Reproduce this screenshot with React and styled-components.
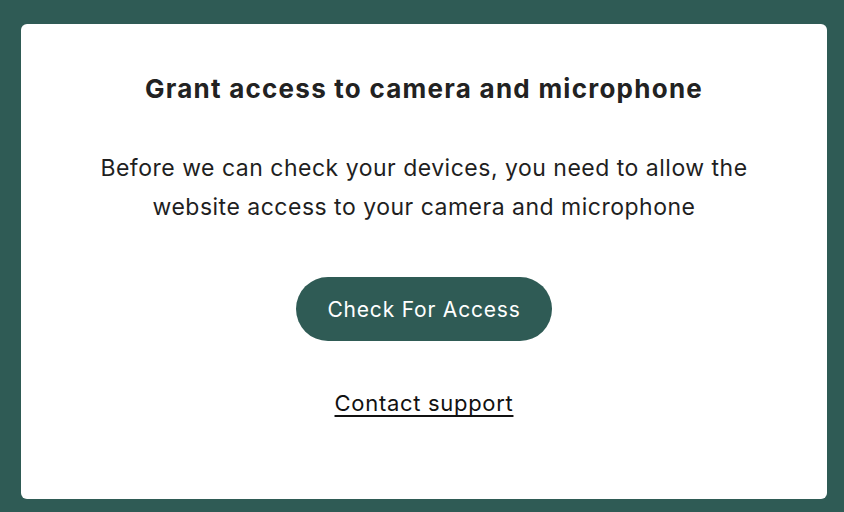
import styled, { createGlobalStyle } from "styled-components";

const GlobalStyle = createGlobalStyle`
  html, body {
    margin: 0;
    padding: 0;
    background: #2f5b55;
  }
  body {
    font-family: Inter, "Noto Sans", sans-serif;
    color: #1f1f1f;
  }
`;

const Page = styled.div`
  width: 844px;
  height: 512px;
  box-sizing: border-box;
  padding: 24px 17px 13px 21px;
  display: flex;
`;

const Card = styled.div`
  flex: 1;
  background: #ffffff;
  border-radius: 6px;
  display: flex;
  flex-direction: column;
  align-items: center;
  padding-top: 49px;
`;

const Title = styled.h1`
  margin: 0;
  font-size: 26px;
  line-height: 32px;
  font-weight: 700;
  color: #222222;
  letter-spacing: 1.25px;
`;

const Text = styled.p`
  margin: 44px 0 0;
  font-size: 23px;
  line-height: 39px;
  font-weight: 400;
  color: #1f1f1f;
  text-align: center;
  letter-spacing: 0.5px;
`;

const Button = styled.button`
  margin-top: 50px;
  width: 256px;
  height: 64px;
  border: none;
  border-radius: 32px;
  background: #2f5b55;
  color: #ffffff;
  font-family: inherit;
  font-size: 21px;
  letter-spacing: 0.8px;
  cursor: pointer;
`;

const SupportLink = styled.a`
  margin-top: 48px;
  font-size: 22px;
  line-height: 28px;
  color: #111111;
  text-decoration: underline;
  text-underline-offset: 4px;
  text-decoration-thickness: 1.5px;
  letter-spacing: 0.7px;
  cursor: pointer;
`;

export default function App() {
  return (
    <>
      <GlobalStyle />
      <Page>
        <Card>
          <Title>Grant access to camera and microphone</Title>
          <Text>
            Before we can check your devices, you need to allow the
            <br />
            website access to your camera and microphone
          </Text>
          <Button>Check For Access</Button>
          <SupportLink>Contact support</SupportLink>
        </Card>
      </Page>
    </>
  );
}
